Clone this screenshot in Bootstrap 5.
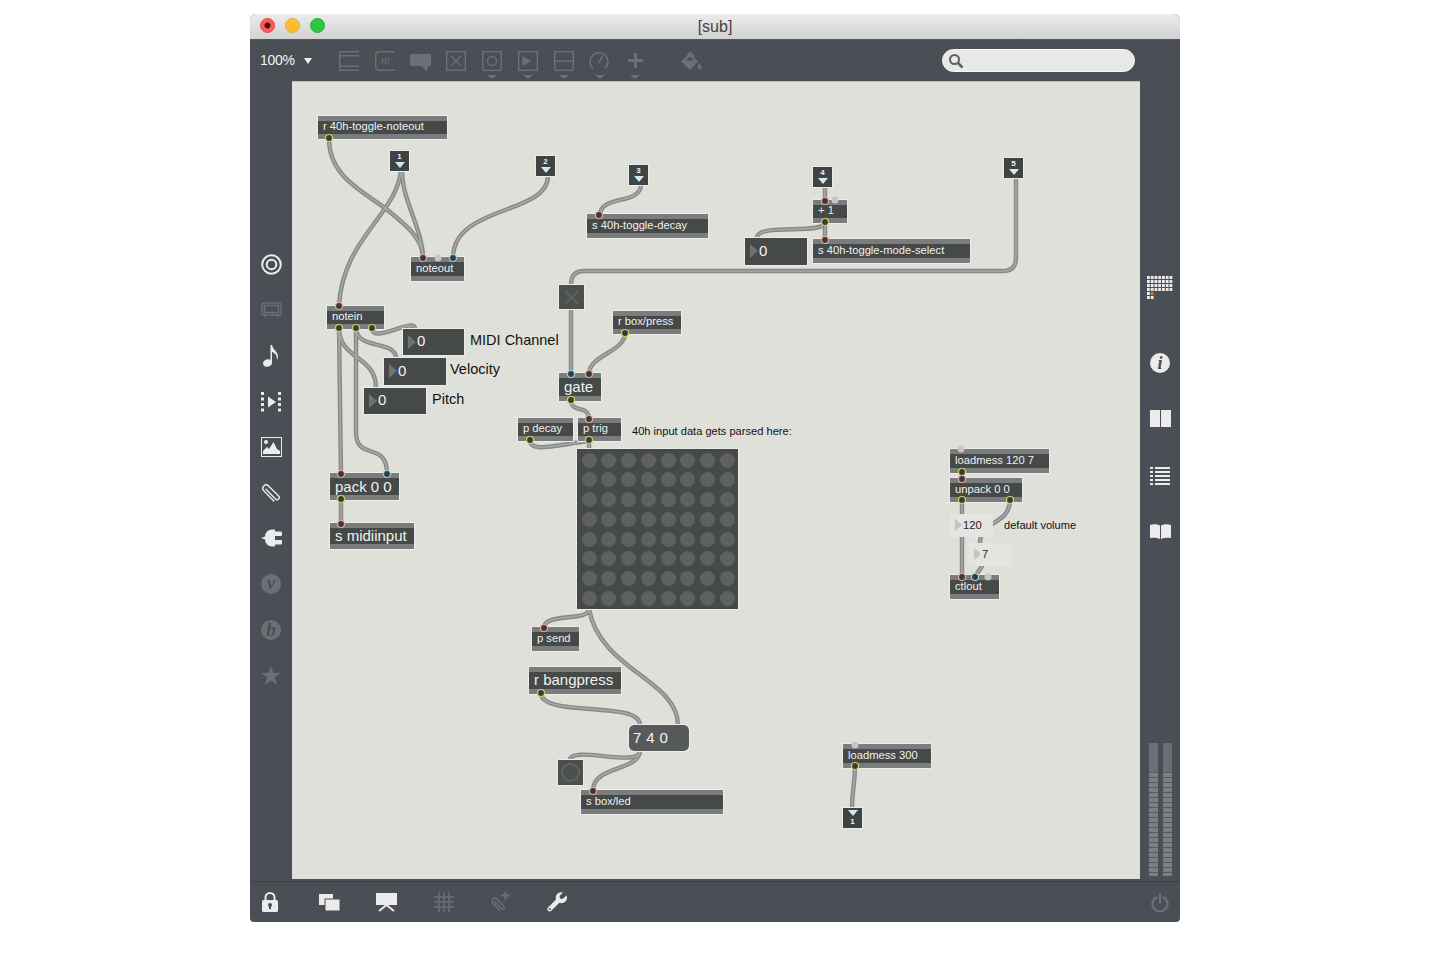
<!DOCTYPE html>
<html lang="en">

<head>
    <meta charset="UTF-8">
    <meta name="viewport" content="width=device-width, initial-scale=1.0">
    <title>[sub]</title>
    <link href="https://cdn.jsdelivr.net/npm/bootstrap@5.3.0/dist/css/bootstrap.min.css" rel="stylesheet">
    <style>
        body { background: #fff; font-family: "Liberation Sans", Arial, sans-serif; }
        .max-window { width: 930px; height: 908px; margin: 14px 0 0 250px; background: #4a4e55; border-radius: 6px 6px 4px 4px; overflow: hidden; }

        .title-bar { height: 26px; background: linear-gradient(#ececec, #d2d2d2); border-bottom: 1px solid #55585c; color: #444; font-size: 16px; position: relative; }
        .traffic-row { position: absolute; left: 10px; top: 4px; gap: 10px; }
        .traffic { width: 15px; height: 15px; border-radius: 50%; display: block; }
        .traffic-red { background: radial-gradient(circle, #4a0d0b 0 2.5px, #fc5b57 3.5px); border: 1px solid #e2463f; }
        .traffic-yellow { background: #ffbd2e; border: 1px solid #e5a73a; }
        .traffic-green { background: #2bc840; border: 1px solid #2aae3b; }

        .tool-bar { height: 41px; padding-left: 10px; padding-right: 45px; }
        .zoom-pick { width: 71px; color: #f2f2f2; font-size: 14px; font-weight: 500; letter-spacing: -.3px; }
        .zoom-caret { width: 0; height: 0; border-left: 4px solid transparent; border-right: 4px solid transparent; border-top: 6px solid #eee; margin-left: 9px; }
        .tool-btn { width: 35.8px; height: 41px; position: relative; }
        .tool-btn svg { display: block; }
        .tool-btn.has-menu::after { content: ""; position: absolute; left: 13px; bottom: 2px; border-left: 5px solid transparent; border-right: 5px solid transparent; border-top: 4px solid #6c7076; }
        .bucket-btn { margin-left: 20px; }
        .search-pill { width: 193px; height: 23px; background: #e8e8e8; border: 1px solid #f6f6f6; border-radius: 12px; padding-left: 5px; }

        .side-left { width: 42px; padding-top: 161px; }
        .side-slot { height: 45.6px; }
        .side-right { width: 40px; padding-bottom: 5px; }
        .right-slot { height: 57px; }
        .right-slot-first { height: 77px; margin-top: 195px; }
        .meter-pair { gap: 5px; padding-left: 9px; }
        .meter-bar { width: 9px; height: 133px; background: linear-gradient(#6b6f75, #6b6f75) top / 100% 29px no-repeat, repeating-linear-gradient(#7c7f84 0 3.6px, #565a60 3.6px 5px); }

        .bottom-bar { height: 41px; padding-left: 12px; padding-right: 11px; border-top: 1px solid #3d4045; }
        .bottom-slot { width: 56.8px; }
        .bottom-slot-first { width: 39.6px; }

        .patch-canvas { width: 848px; height: 798px; background: #dfe0da; position: relative; border-top: 1px solid #bdbdb8; }
        .cord-layer { position: absolute; left: 0; top: 0; width: 848px; height: 798px; fill: none; stroke-linecap: round; pointer-events: none; }
        .cord-under { stroke: #888; stroke-width: 4.4; }
        .cord-over { stroke: #a8a8a8; stroke-width: 1.6; }
        .port-layer circle { stroke-width: 1.2; fill: #3a3a3a; }
        .port-layer .port-in { stroke: #f0a79f; }
        .port-layer .port-blue { stroke: #93d7e6; }
        .port-layer .port-out { stroke: #d3d45f; }
        .port-layer .port-off { stroke: none; fill: #c6c6c6; }

        .mx-obj { position: absolute; background: #454948; border-top: 5px solid #7a7c7e; border-bottom: 5px solid #7a7c7e; outline: 1px solid #ecece8; color: #f1f1f1; font-size: 11.2px; padding-left: 5px; padding-bottom: 2px; white-space: nowrap; }
        .mx-large { font-size: 15px; padding-bottom: 0; }
        .mx-num { position: absolute; background: #454948; outline: 1px solid #ecece8; color: #f4f4f4; font-size: 15px; padding-bottom: 1px; }
        .mx-num::before { content: ""; margin: 0 1px 0 5px; border-left: 8px solid #6f7272; border-top: 7px solid transparent; border-bottom: 7px solid transparent; }
        .mx-num-light { background: #e4e4e1; outline: none; color: #222; font-size: 11.2px; font-weight: 500; }
        .mx-num-light::before { border-left-color: #c4c4c2; border-top-width: 6px; border-bottom-width: 6px; border-left-width: 7px; }
        .mx-inlet { position: absolute; width: 19px; height: 20px; background: #3f4342; outline: 1px solid #ecece8; color: #f2f2f2; font-size: 8px; font-weight: 700; line-height: 10px; padding-top: 1px; }
        .mx-inlet::after { content: ""; border-left: 5px solid transparent; border-right: 5px solid transparent; border-top: 6px solid #cfeaf0; }
        .mx-outlet { position: absolute; width: 19px; height: 20px; background: #3f4342; outline: 1px solid #ecece8; color: #f2f2f2; font-size: 8px; font-weight: 700; line-height: 9px; padding-top: 2px; }
        .mx-outlet::before { content: ""; border-left: 5px solid transparent; border-right: 5px solid transparent; border-top: 6px solid #cfeaf0; margin-bottom: 1px; }
        .mx-label { position: absolute; color: #111; font-size: 14.5px; height: 20px; white-space: nowrap; }
        .mx-note { position: absolute; color: #111; font-size: 11.1px; height: 16px; white-space: nowrap; }
        .mx-toggle, .mx-bang { position: absolute; width: 25px; height: 24px; background: #4b4f4e; outline: 1px solid #ecece8; }
        .mx-msg { position: absolute; background: #565a5b; border-radius: 5px; outline: 1px solid #ecece8; color: #f4f4f4; font-size: 15px; padding-left: 4px; letter-spacing: .4px; }
        .led-matrix { position: absolute; display: grid; grid-template-columns: repeat(8, 15px); grid-auto-rows: 15px; gap: 4.8px; background: #454948; padding: 3.5px 0 0 4.5px; outline: 1px solid #ecece8; }
        .led-matrix i { background: #5f6161; border-radius: 50%; }

        #r-noteout { left: 26px; top: 34px; width: 129px; height: 23px; }
        #in-1 { left: 98px; top: 69px; }
        #in-2 { left: 244px; top: 74px; }
        #in-3 { left: 337px; top: 83px; }
        #in-4 { left: 521px; top: 85px; }
        #in-5 { left: 712px; top: 76px; }
        #out-1 { left: 551px; top: 726px; }
        #noteout { left: 119px; top: 175px; width: 53px; height: 24px; }
        #notein { left: 35px; top: 224px; width: 57px; height: 23px; }
        #pack { left: 38px; top: 391px; width: 69px; height: 27px; padding-top: 1px; }
        #midiinput { left: 38px; top: 441px; width: 84px; height: 26px; }
        #num-midi { left: 111px; top: 247px; width: 61px; height: 26px; }
        #num-vel { left: 92px; top: 276px; width: 62px; height: 27px; }
        #num-pitch { left: 72px; top: 306px; width: 62px; height: 26px; }
        #lbl-midi { left: 178px; top: 249px; }
        #lbl-vel { left: 158px; top: 278px; }
        #lbl-pitch { left: 140px; top: 308px; }
        #s-decay { left: 295px; top: 132px; width: 121px; height: 24px; }
        #plus-1 { left: 521px; top: 118px; width: 34px; height: 23px; }
        #num-mode { left: 453px; top: 156px; width: 62px; height: 27px; }
        #s-mode { left: 521px; top: 157px; width: 157px; height: 24px; }
        #gate-toggle { left: 267px; top: 203px; }
        #r-box { left: 321px; top: 229px; width: 68px; height: 23px; }
        #gate { left: 267px; top: 291px; width: 42px; height: 28px; }
        #p-decay { left: 226px; top: 336px; width: 55px; height: 23px; }
        #p-trig { left: 286px; top: 336px; width: 43px; height: 23px; }
        #note-parse { left: 340px; top: 341px; }
        #matrix { left: 285px; top: 367px; width: 161px; height: 160px; }
        #p-send { left: 240px; top: 545px; width: 47px; height: 24px; }
        #r-bang { left: 237px; top: 585px; width: 92px; height: 27px; }
        #msg-740 { left: 337px; top: 643px; width: 60px; height: 26px; }
        #bang { left: 266px; top: 678px; height: 25px; }
        #s-led { left: 289px; top: 708px; width: 142px; height: 24px; }
        #load-120 { left: 658px; top: 367px; width: 99px; height: 24px; }
        #unpack { left: 658px; top: 396px; width: 72px; height: 24px; }
        #num-120 { left: 658px; top: 432px; width: 43px; height: 23px; }
        #note-volume { left: 712px; top: 435px; }
        #num-7 { left: 677px; top: 461px; width: 43px; height: 23px; }
        #ctlout { left: 658px; top: 493px; width: 49px; height: 24px; }
        #load-300 { left: 551px; top: 662px; width: 88px; height: 24px; }
    </style>
</head>

<body>
    <div class="max-window d-flex flex-column">
        <!-- title -->
        <div class="title-bar d-flex align-items-center justify-content-center flex-shrink-0">
            <div class="traffic-row d-flex">
                <span class="traffic traffic-red"></span>
                <span class="traffic traffic-yellow"></span>
                <span class="traffic traffic-green"></span>
            </div>
            <span>[sub]</span>
        </div>

        <!-- top toolbar -->
        <div class="tool-bar d-flex align-items-center flex-shrink-0">
            <div class="zoom-pick d-flex align-items-center">100%<span class="zoom-caret"></span></div>
            <div class="tool-btn d-flex align-items-center justify-content-center">
                <svg width="20" height="20" viewBox="0 0 20 20" fill="none" stroke="#6c7076" stroke-width="1.4"><path d="M.7 0V20M.7 .7H20M.7 4.7H20M.7 15.3H20M.7 19.3H20"/></svg>
            </div>
            <div class="tool-btn d-flex align-items-center justify-content-center">
                <svg width="20" height="20" viewBox="0 0 20 20" fill="none" stroke="#6c7076" stroke-width="1.4"><path d="M20 .7H4A3.3 3.3 0 0 0 .7 4V16A3.3 3.3 0 0 0 4 19.3H20"/><text x="6" y="13" font-family="Liberation Serif" font-style="italic" font-size="12" fill="#6c7076" stroke="none">m</text></svg>
            </div>
            <div class="tool-btn d-flex align-items-center justify-content-center">
                <svg width="21" height="20" viewBox="0 0 21 20" fill="#6c7076"><path d="M0 3H21V15H18L17 20 11 15H0Z"/></svg>
            </div>
            <div class="tool-btn d-flex align-items-center justify-content-center">
                <svg width="20" height="20" viewBox="0 0 20 20" fill="none" stroke="#6c7076" stroke-width="1.4"><rect x=".7" y=".7" width="18.6" height="18.6"/><path d="M5 5 15 15M15 5 5 15"/></svg>
            </div>
            <div class="tool-btn has-menu d-flex align-items-center justify-content-center">
                <svg width="20" height="20" viewBox="0 0 20 20" fill="none" stroke="#6c7076" stroke-width="1.4"><rect x=".7" y=".7" width="18.6" height="18.6"/><circle cx="10" cy="10" r="4.5"/></svg>
            </div>
            <div class="tool-btn has-menu d-flex align-items-center justify-content-center">
                <svg width="20" height="20" viewBox="0 0 20 20" fill="none" stroke="#6c7076" stroke-width="1.4"><rect x=".7" y=".7" width="18.6" height="18.6"/><path d="M5 6 12 10 5 14Z" fill="#6c7076"/></svg>
            </div>
            <div class="tool-btn has-menu d-flex align-items-center justify-content-center">
                <svg width="20" height="20" viewBox="0 0 20 20" fill="none" stroke="#6c7076" stroke-width="1.4"><rect x=".7" y=".7" width="18.6" height="18.6"/><path d="M1 10H19"/></svg>
            </div>
            <div class="tool-btn has-menu d-flex align-items-center justify-content-center">
                <svg width="20" height="20" viewBox="0 0 20 20" fill="none" stroke="#6c7076" stroke-width="1.6"><path d="M4 17.5A9 9 0 1 1 16 17.5"/><path d="M9.5 12 13.5 5.5"/></svg>
            </div>
            <div class="tool-btn has-menu d-flex align-items-center justify-content-center">
                <svg width="15" height="15" viewBox="0 0 15 15" fill="none" stroke="#6c7076" stroke-width="3"><path d="M7.5 0V15M0 7.5H15"/></svg>
            </div>
            <div class="tool-btn bucket-btn d-flex align-items-center justify-content-center">
                <svg width="21" height="20" viewBox="0 0 21 20" fill="#6c7076"><path d="M0 10.500 9 2.500 17 10.500 9 19Z"/><path d="M4.500 9.500 9 5.500 13 9.500Z" fill="#4a4e55"/><path d="M5.500 6.500 8 1.800Q9 .6 10 1.800L13 6" fill="none" stroke="#6c7076" stroke-width="1.400"/><path d="M18.500 12C19.500 14 20.500 15 20.500 16.300A2 2 0 0 1 16.500 16.300C16.500 15 17.500 14 18.500 12Z"/></svg>
            </div>
            <div class="search-pill ms-auto d-flex align-items-center">
                <svg width="16" height="16" viewBox="0 0 16 16" fill="none" stroke="#5b5e62" stroke-width="2"><circle cx="6.5" cy="6.5" r="4.5"/><path d="M10 10 14.5 14.5" stroke-width="2.5"/></svg>
            </div>
        </div>

        <div class="d-flex flex-grow-1">
            <!-- left sidebar -->
            <div class="side-left d-flex flex-column flex-shrink-0">
                <div class="side-slot d-flex align-items-center justify-content-center">
                    <svg width="21" height="21" viewBox="0 0 21 21" fill="none" stroke="#ececec" stroke-width="2"><circle cx="10.5" cy="10.5" r="9.3"/><circle cx="10.5" cy="10.5" r="4.8"/></svg>
                </div>
                <div class="side-slot d-flex align-items-center justify-content-center">
                    <svg width="21" height="16" viewBox="0 0 21 16" fill="none" stroke="#6c7076" stroke-width="1.4"><rect x="1" y="1" width="19" height="12" rx="1.5"/><rect x="3.5" y="3.5" width="14" height="7"/><path d="M4 13V15.500M17 13V15.500"/></svg>
                </div>
                <div class="side-slot d-flex align-items-center justify-content-center">
                    <svg width="16" height="22" viewBox="0 0 16 22" fill="#ececec"><ellipse cx="4.5" cy="18" rx="4.5" ry="3.6" transform="rotate(-20 4.5 18)"/><path d="M7.5 0H9V18H7.5Z"/><path d="M9 0C10 5 15 6 15 12 15 13 14.5 14 14 15 14 10 12 8 9 7Z"/></svg>
                </div>
                <div class="side-slot d-flex align-items-center justify-content-center">
                    <svg width="20" height="20" viewBox="0 0 20 20" fill="#ececec"><path d="M0 0H3V3H0ZM0 5.5H3V8.5H0ZM0 11H3V14H0ZM0 16.5H3V19.5H0ZM17 0H20V3H17ZM17 5.5H20V8.5H17ZM17 11H20V14H17ZM17 16.5H20V19.500H17Z"/><path d="M7 4.5 15 10 7 15.500Z"/></svg>
                </div>
                <div class="side-slot d-flex align-items-center justify-content-center">
                    <svg width="21" height="20" viewBox="0 0 21 20"><rect x=".5" y=".5" width="20" height="19" fill="none" stroke="#ececec"/><circle cx="5" cy="5" r="2" fill="#ececec"/><path d="M2 17V14L6 10 8 12 12.5 5 16 12 19 14V17Z" fill="#ececec"/></svg>
                </div>
                <div class="side-slot d-flex align-items-center justify-content-center">
                    <svg width="20" height="20" viewBox="0 0 20 20" fill="none" stroke="#ececec" stroke-width="1.4" stroke-linecap="round"><path d="M5 6.300 14.500 16A2.100 2.100 0 0 0 17.600 13L7.500 3A3.300 3.300 0 0 0 2.800 7.700L12.800 18"/></svg>
                </div>
                <div class="side-slot d-flex align-items-center justify-content-center">
                    <svg width="21" height="20" viewBox="0 0 21 20" fill="#ececec"><path d="M0 10 4 8.500A7 7 0 0 1 11 1.500H14V18.500H11A7 7 0 0 1 4 11.500Z"/><rect x="13" y="3.500" width="8" height="4.500" rx="1"/><rect x="13" y="12" width="8" height="4.500" rx="1"/></svg>
                </div>
                <div class="side-slot d-flex align-items-center justify-content-center">
                    <svg width="20" height="20" viewBox="0 0 20 20"><circle cx="10" cy="10" r="10" fill="#6c7076"/><text x="10" y="15" text-anchor="middle" font-family="Liberation Serif" font-style="italic" font-weight="700" font-size="18" fill="#4a4e55">v</text></svg>
                </div>
                <div class="side-slot d-flex align-items-center justify-content-center">
                    <svg width="20" height="20" viewBox="0 0 20 20"><circle cx="10" cy="10" r="10" fill="#6c7076"/><text x="10" y="16" text-anchor="middle" font-family="Liberation Serif" font-style="italic" font-weight="700" font-size="19" fill="#4a4e55">b</text></svg>
                </div>
                <div class="side-slot d-flex align-items-center justify-content-center">
                    <svg width="20" height="19" viewBox="0 0 20 19" fill="#6c7076"><path d="M10 0 12.4 7H20L13.8 11.400 16.200 19 10 14.400 3.800 19 6.200 11.400 0 7H7.600Z"/></svg>
                </div>
            </div>

            <!-- patcher -->
            <div class="patch-canvas flex-shrink-0">
                <svg class="cord-layer" viewBox="292 82 848 798">
                    <defs>
                        <g id="cords">
                            <path d="M329 139C329 175 360 190 385 208 405 224 423 238 423 258"/>
                            <path d="M402 171C402 200 423 230 423 258"/>
                            <path d="M401 171C396 215 342 240 339 306"/>
                            <path d="M548 176C548 215 453 205 453 258"/>
                            <path d="M641 185C640 205 600 195 600 215"/>
                            <path d="M825 187V201"/>
                            <path d="M825 222V240"/>
                            <path d="M825 222C825 236 757 222 757 238"/>
                            <path d="M1016 177V258Q1016 271 1003 271H584Q571 271 571 285"/>
                            <path d="M571 309V374"/>
                            <path d="M625 333C625 352 589 355 589 374"/>
                            <path d="M571 400C571 414 589 404 589 419"/>
                            <path d="M530 440C530 454 560 444 589 441"/>
                            <path d="M589 440V449"/>
                            <path d="M589 609C589 622 544 612 544 628"/>
                            <path d="M589 609C600 670 678 680 678 725"/>
                            <path d="M541 693C541 718 640 700 640 725"/>
                            <path d="M640 751C640 768 570 745 570 760"/>
                            <path d="M640 751C638 772 593 765 593 791"/>
                            <path d="M339 328 341 474"/>
                            <path d="M356 328V432C356 462 387 440 387 474"/>
                            <path d="M372 328C372 345 415 316 415 329"/>
                            <path d="M356 328C356 350 396 340 396 358"/>
                            <path d="M339 328C339 360 376 355 376 388"/>
                            <path d="M341 499V524"/>
                            <path d="M962 472V479"/>
                            <path d="M962 500V577"/>
                            <path d="M1010 500C1010 525 980 520 980 543"/>
                            <path d="M982 566 975 577"/>
                            <path d="M855 766C855 785 852 790 852 808"/>
                        </g>
                    </defs>
                    <use href="#cords" class="cord-under"/>
                    <use href="#cords" class="cord-over"/>
                </svg>

                <div id="r-noteout" class="mx-obj d-flex align-items-center">r 40h-toggle-noteout</div>
                <div id="in-1" class="mx-inlet d-flex flex-column align-items-center">1</div>
                <div id="in-2" class="mx-inlet d-flex flex-column align-items-center">2</div>
                <div id="in-3" class="mx-inlet d-flex flex-column align-items-center">3</div>
                <div id="in-4" class="mx-inlet d-flex flex-column align-items-center">4</div>
                <div id="in-5" class="mx-inlet d-flex flex-column align-items-center">5</div>
                <div id="noteout" class="mx-obj d-flex align-items-center">noteout</div>
                <div id="notein" class="mx-obj d-flex align-items-center">notein</div>
                <div id="num-midi" class="mx-num d-flex align-items-center">0</div>
                <div id="lbl-midi" class="mx-label d-flex align-items-center">MIDI Channel</div>
                <div id="num-vel" class="mx-num d-flex align-items-center">0</div>
                <div id="lbl-vel" class="mx-label d-flex align-items-center">Velocity</div>
                <div id="num-pitch" class="mx-num d-flex align-items-center">0</div>
                <div id="lbl-pitch" class="mx-label d-flex align-items-center">Pitch</div>
                <div id="pack" class="mx-obj mx-large d-flex align-items-center">pack 0 0</div>
                <div id="midiinput" class="mx-obj mx-large d-flex align-items-center">s midiinput</div>
                <div id="s-decay" class="mx-obj d-flex align-items-center">s 40h-toggle-decay</div>
                <div id="plus-1" class="mx-obj d-flex align-items-center">+ 1</div>
                <div id="num-mode" class="mx-num d-flex align-items-center">0</div>
                <div id="s-mode" class="mx-obj d-flex align-items-center">s 40h-toggle-mode-select</div>
                <div id="gate-toggle" class="mx-toggle d-flex align-items-center justify-content-center">
                    <svg width="15" height="15" viewBox="0 0 15 15" fill="none" stroke="#5f6261" stroke-width="2"><path d="M1 1 14 14M14 1 1 14"/></svg>
                </div>
                <div id="r-box" class="mx-obj d-flex align-items-center">r box/press</div>
                <div id="gate" class="mx-obj mx-large d-flex align-items-center">gate</div>
                <div id="p-decay" class="mx-obj d-flex align-items-center">p decay</div>
                <div id="p-trig" class="mx-obj d-flex align-items-center">p trig</div>
                <div id="note-parse" class="mx-note d-flex align-items-center">40h input data gets parsed here:</div>
                <div id="matrix" class="led-matrix">
                    <i></i><i></i><i></i><i></i><i></i><i></i><i></i><i></i>
                    <i></i><i></i><i></i><i></i><i></i><i></i><i></i><i></i>
                    <i></i><i></i><i></i><i></i><i></i><i></i><i></i><i></i>
                    <i></i><i></i><i></i><i></i><i></i><i></i><i></i><i></i>
                    <i></i><i></i><i></i><i></i><i></i><i></i><i></i><i></i>
                    <i></i><i></i><i></i><i></i><i></i><i></i><i></i><i></i>
                    <i></i><i></i><i></i><i></i><i></i><i></i><i></i><i></i>
                    <i></i><i></i><i></i><i></i><i></i><i></i><i></i><i></i>
                </div>
                <div id="p-send" class="mx-obj d-flex align-items-center">p send</div>
                <div id="r-bang" class="mx-obj mx-large d-flex align-items-center">r bangpress</div>
                <div id="msg-740" class="mx-msg d-flex align-items-center">7 4 0</div>
                <div id="bang" class="mx-bang d-flex align-items-center justify-content-center">
                    <svg width="21" height="21" viewBox="0 0 21 21" fill="none" stroke="#5f6261" stroke-width="2"><circle cx="10.5" cy="10.5" r="8.5"/></svg>
                </div>
                <div id="s-led" class="mx-obj d-flex align-items-center">s box/led</div>
                <div id="load-120" class="mx-obj d-flex align-items-center">loadmess 120 7</div>
                <div id="unpack" class="mx-obj d-flex align-items-center">unpack 0 0</div>
                <div id="num-120" class="mx-num mx-num-light d-flex align-items-center">120</div>
                <div id="note-volume" class="mx-note d-flex align-items-center">default volume</div>
                <div id="num-7" class="mx-num mx-num-light d-flex align-items-center">7</div>
                <div id="ctlout" class="mx-obj d-flex align-items-center">ctlout</div>
                <div id="load-300" class="mx-obj d-flex align-items-center">loadmess 300</div>
                <div id="out-1" class="mx-outlet d-flex flex-column align-items-center">1</div>

                <svg class="cord-layer port-layer" viewBox="292 82 848 798">
                    <circle class="port-out" cx="329" cy="138" r="3.5"/>
                    <circle class="port-in" cx="423" cy="258" r="3.5"/><circle class="port-off" cx="438" cy="258" r="3.5"/><circle class="port-blue" cx="453" cy="258" r="3.5"/>
                    <circle class="port-in" cx="339" cy="306" r="3.5"/>
                    <circle class="port-out" cx="339" cy="328" r="3.5"/><circle class="port-out" cx="356" cy="328" r="3.5"/><circle class="port-out" cx="372" cy="328" r="3.5"/>
                    <circle class="port-in" cx="341" cy="474" r="3.5"/><circle class="port-blue" cx="387" cy="474" r="3.5"/><circle class="port-out" cx="341" cy="499" r="3.5"/>
                    <circle class="port-in" cx="341" cy="524" r="3.5"/>
                    <circle class="port-in" cx="599" cy="215" r="3.5"/>
                    <circle class="port-in" cx="825" cy="201" r="3.5"/><circle class="port-off" cx="835" cy="200" r="3.5"/><circle class="port-out" cx="825" cy="222" r="3.5"/>
                    <circle class="port-in" cx="825" cy="240" r="3.5"/>
                    <circle class="port-out" cx="625" cy="333" r="3.5"/>
                    <circle class="port-blue" cx="571" cy="374" r="3.5"/><circle class="port-in" cx="589" cy="374" r="3.5"/><circle class="port-out" cx="571" cy="400" r="3.5"/>
                    <circle class="port-out" cx="530" cy="440" r="3.5"/>
                    <circle class="port-in" cx="589" cy="419" r="3.5"/><circle class="port-out" cx="589" cy="440" r="3.5"/>
                    <circle class="port-in" cx="544" cy="628" r="3.5"/>
                    <circle class="port-out" cx="541" cy="693" r="3.5"/>
                    <circle class="port-in" cx="593" cy="791" r="3.5"/>
                    <circle class="port-off" cx="961" cy="449" r="3.5"/><circle class="port-out" cx="962" cy="472" r="3.5"/>
                    <circle class="port-in" cx="962" cy="479" r="3.5"/>
                    <circle class="port-out" cx="962" cy="500" r="3.5"/><circle class="port-out" cx="1010" cy="500" r="3.5"/>
                    <circle class="port-in" cx="962" cy="577" r="3.5"/><circle class="port-blue" cx="975" cy="577" r="3.5"/><circle class="port-off" cx="988" cy="577" r="3.5"/>
                    <circle class="port-off" cx="855" cy="745" r="3.5"/><circle class="port-out" cx="855" cy="766" r="3.5"/>
                </svg>
            </div>

            <!-- right sidebar -->
            <div class="side-right d-flex flex-column flex-shrink-0">
                <div class="right-slot-first d-flex align-items-start justify-content-center">
                    <svg width="26" height="24" viewBox="0 0 26 24">
                        <defs><pattern id="seq-cell" width="3.75" height="4" patternUnits="userSpaceOnUse"><rect width="2.8" height="3" fill="#ececec"/></pattern></defs>
                        <rect width="26" height="16" fill="url(#seq-cell)"/>
                        <rect y="16" width="2.8" height="3" fill="#ececec"/><rect x="3.75" y="16" width="2.8" height="3" fill="#e2701f"/>
                        <rect y="20" width="2.8" height="3" fill="#ececec"/><rect x="3.75" y="20" width="2.8" height="3" fill="#ececec"/>
                    </svg>
                </div>
                <div class="right-slot d-flex align-items-start justify-content-center">
                    <svg width="20" height="20" viewBox="0 0 20 20"><circle cx="10" cy="10" r="10" fill="#ececec"/><text x="10" y="16" text-anchor="middle" font-family="Liberation Serif" font-style="italic" font-weight="700" font-size="18" fill="#4a4e55">i</text></svg>
                </div>
                <div class="right-slot d-flex align-items-start justify-content-center">
                    <svg width="21" height="17" viewBox="0 0 21 17" fill="#ececec"><rect width="10" height="17"/><rect x="11" width="10" height="17"/></svg>
                </div>
                <div class="right-slot d-flex align-items-start justify-content-center">
                    <svg width="20" height="18" viewBox="0 0 20 18" fill="#ececec"><path d="M0 0H3V2H0ZM0 4H3V6H0ZM0 8H3V10H0ZM0 12H3V14H0ZM0 16H3V18H0ZM5 0H20V2H5ZM5 4H20V6H5ZM5 8H20V10H5ZM5 12H20V14H5ZM5 16H20V18H5Z"/></svg>
                </div>
                <div class="right-slot d-flex align-items-start justify-content-center">
                    <svg width="21" height="15" viewBox="0 0 21 15" fill="#ececec"><path d="M0 1C3 0 7 0 10 1.5V15C7 13.5 3 13.5 0 14Z"/><path d="M21 1C18 0 14 0 11 1.5V15C14 13.5 18 13.5 21 14Z"/></svg>
                </div>
                <div class="meter-pair d-flex mt-auto">
                    <div class="meter-bar"></div>
                    <div class="meter-bar"></div>
                </div>
            </div>
        </div>

        <!-- bottom toolbar -->
        <div class="bottom-bar d-flex align-items-center flex-shrink-0">
            <div class="bottom-slot-first d-flex justify-content-start">
                <svg width="16" height="20" viewBox="0 0 16 20"><path d="M3.5 9V5.5A4.5 4.5 0 0 1 12.5 5.5V9" fill="none" stroke="#ececec" stroke-width="2"/><rect y="8" width="16" height="12" rx="1.5" fill="#ececec"/><circle cx="8" cy="13" r="2" fill="#4a4e55"/><rect x="7" y="13" width="2" height="4" fill="#4a4e55"/></svg>
            </div>
            <div class="bottom-slot d-flex justify-content-center">
                <svg width="21" height="17" viewBox="0 0 21 17"><rect width="14" height="11" fill="#ececec"/><rect x="6" y="5" width="15" height="12" fill="#ececec" stroke="#4a4e55"/></svg>
            </div>
            <div class="bottom-slot d-flex justify-content-center">
                <svg width="21" height="19" viewBox="0 0 21 19" fill="#ececec"><rect width="21" height="12"/><path d="M10.5 12 3 18" stroke="#ececec" stroke-width="2"/><path d="M10.5 12 18 18" stroke="#ececec" stroke-width="2"/></svg>
            </div>
            <div class="bottom-slot d-flex justify-content-center">
                <svg width="20" height="20" viewBox="0 0 20 20" stroke="#6c7076" stroke-width="1.5" fill="none"><path d="M5 0V20M10 0V20M15 0V20M0 5H20M0 10H20M0 15H20"/></svg>
            </div>
            <div class="bottom-slot d-flex justify-content-center">
                <svg width="21" height="21" viewBox="0 0 21 21" fill="none" stroke="#6c7076" stroke-width="1.4" stroke-linecap="round"><path d="M4.500 9.500 11.500 17A1.800 1.800 0 0 0 14 14.500L6.500 6.500A3 3 0 0 0 2.300 10.500L9.500 18.500"/><path d="M15.500 0V7M12 3.500H19" stroke-width="2"/></svg>
            </div>
            <div class="bottom-slot d-flex justify-content-center">
                <svg width="20" height="20" viewBox="0 0 20 20" fill="#ececec"><path d="M19.5 3.500 15.500 7 13 6.500 12.500 4 16 .5A5.500 5.500 0 0 0 9 7.500L.8 15.800A2.300 2.300 0 0 0 4 19L12.500 10.800A5.500 5.500 0 0 0 19.500 3.500Z"/><circle cx="2.8" cy="17.100" r="1" fill="#4a4e55"/></svg>
            </div>
            <div class="ms-auto d-flex">
                <svg width="18" height="19" viewBox="0 0 18 19" fill="none" stroke="#6c7076" stroke-width="2.4" stroke-linecap="round"><path d="M5 4.500A7.500 7.500 0 1 0 13 4.500"/><path d="M9 1V9.500"/></svg>
            </div>
        </div>
    </div>

    <script src="https://cdn.jsdelivr.net/npm/bootstrap@5.3.0/dist/js/bootstrap.bundle.min.js"></script>
</body>

</html>
